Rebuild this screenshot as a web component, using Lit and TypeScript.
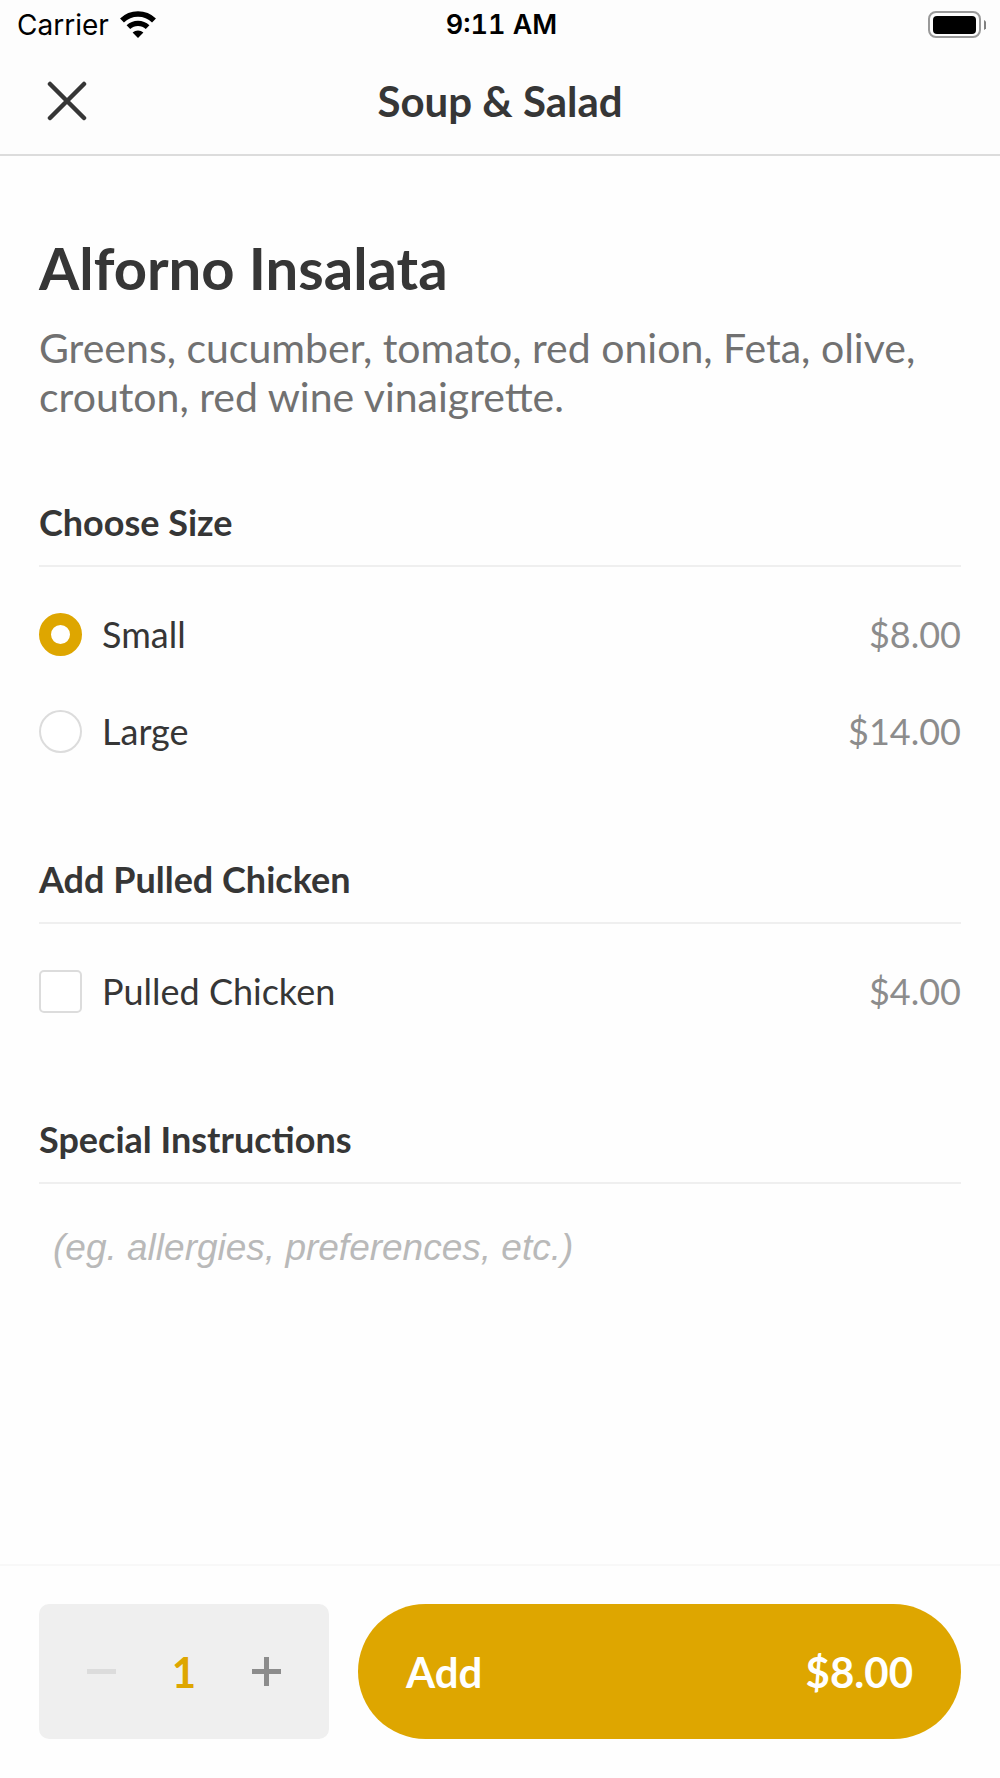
import { LitElement, html, css, svg } from "lit";
import { customElement, state } from "lit/decorators.js";

interface Size {
  id: string;
  name: string;
  price: number;
}

const SIZES: Size[] = [
  { id: "small", name: "Small", price: 8 },
  { id: "large", name: "Large", price: 14 },
];

const CHICKEN_PRICE = 4;

const money = (value: number) => `$${value.toFixed(2)}`;

const wifiIcon = svg`
  <path d="M2 9.500A23 23 0 0 1 34 9.500" fill="none" stroke="#000" stroke-width="5.600" />
  <path d="M8.400 16.200A13.800 13.800 0 0 1 27.600 16.200" fill="none" stroke="#000" stroke-width="5.200" />
  <path d="M12.600 21.600A8 8 0 0 1 23.400 21.600L18 27Z" fill="#000" />
`;

@customElement("status-bar")
export class StatusBar extends LitElement {
  static styles = css`
    :host {
      display: grid;
      grid-template-columns: 1fr auto 1fr;
      align-items: center;
      height: 50px;
      padding: 0 14px 0 17px;
      font-family: Inter, "Liberation Sans", sans-serif;
      font-size: 28px;
      line-height: 34px;
      color: #000;
    }
    .carrier {
      display: flex;
      align-items: center;
      gap: 11px;
    }
    .time {
      font-size: 27px;
      font-weight: 600;
      font-variant-numeric: tabular-nums;
    }
    .battery {
      justify-self: end;
    }
    svg {
      display: block;
    }
  `;

  render() {
    return html`
      <div class="carrier">
        <span>Carrier</span>
        <svg width="36" height="28" viewBox="0 0 36 28" aria-hidden="true">${wifiIcon}</svg>
      </div>
      <div class="time">9:11 AM</div>
      <svg class="battery" width="59" height="28" viewBox="0 0 59 28" aria-hidden="true">
        <rect x="2" y="1" width="51" height="25" rx="7" fill="none" stroke="#999" stroke-width="2" />
        <rect x="6" y="5" width="43" height="18" rx="4" fill="#000" />
        <path d="M57 9Q60 10.500 60 14T57 19Z" fill="#808080" />
      </svg>
    `;
  }
}

@customElement("app-root")
export class AppRoot extends LitElement {
  @state() private size = "small";
  @state() private chicken = false;
  @state() private quantity = 1;

  static styles = css`
    :host {
      --ink: #363636;
      --gold: #dea600;
      --gutter: 39px;
      display: flex;
      flex-direction: column;
      min-height: 100vh;
      background: #fefefe;
      color: var(--ink);
      font-family: Lato, "Liberation Sans", sans-serif;
    }
    * {
      box-sizing: border-box;
    }
    button,
    input,
    textarea {
      margin: 0;
      padding: 0;
      border: 0;
      background: none;
      color: inherit;
      font: inherit;
    }
    button,
    label {
      cursor: pointer;
    }
    svg {
      display: block;
    }
    .top {
      background: #fdfdfd;
      border-bottom: 2px solid #dcdcdc;
    }
    .nav {
      display: grid;
      grid-template-columns: 1fr auto 1fr;
      align-items: center;
      padding: 25px var(--gutter) 27px;
    }
    .close {
      justify-self: start;
      padding: 6px 8px;
    }
    .nav-title {
      margin: 0;
      font-size: 42px;
      line-height: 48px;
      font-weight: 700;
    }
    main {
      flex: 1;
      padding: 77px var(--gutter) 40px;
    }
    .name {
      margin: 0 0 20px;
      font-size: 58px;
      line-height: 70px;
      font-weight: 700;
    }
    .description {
      margin: 0 0 79px;
      font-size: 41px;
      line-height: 49px;
      color: #717171;
    }
    .group {
      margin: 0 0 104px;
      padding: 0;
      border: 0;
      min-width: 0;
    }
    .group-title {
      display: block;
      width: 100%;
      margin: 0 0 46px;
      padding: 0 0 21px;
      border-bottom: 2px solid #efefef;
      font-size: 36px;
      line-height: 44px;
      font-weight: 700;
    }
    .options {
      display: flex;
      flex-direction: column;
      gap: 54px;
    }
    .option {
      display: flex;
      align-items: center;
      gap: 20px;
      height: 43px;
      font-size: 36px;
      line-height: 43px;
    }
    .price {
      margin-left: auto;
      color: #8c8c8c;
    }
    .mark {
      appearance: none;
      flex: none;
      width: 43px;
      height: 43px;
      border: 2px solid #dcdcdc;
      background: #fff;
    }
    .mark.radio {
      border-radius: 50%;
    }
    .mark.radio:checked {
      border: 12px solid var(--gold);
    }
    .mark.box {
      border-radius: 5px;
    }
    .mark.box:checked {
      border-color: var(--gold);
      background: var(--gold);
    }
    .group.notes {
      margin: 0;
    }
    .notes .group-title {
      margin: 0 0 42px;
    }
    .note {
      display: block;
      width: 100%;
      height: 180px;
      padding: 0 14px;
      resize: none;
      outline: none;
      font-family: "Liberation Sans", Arial, sans-serif;
      font-size: 37px;
      line-height: 44px;
    }
    .note::placeholder {
      color: #b9b9b9;
      font-style: italic;
      opacity: 1;
    }
    .footer {
      display: grid;
      grid-template-columns: 290fr 603fr;
      gap: 29px;
      padding: 38px var(--gutter) 39px;
      border-top: 2px solid #f8f8f8;
      font-size: 42px;
      line-height: 48px;
      font-weight: 700;
    }
    .stepper {
      display: flex;
      align-items: center;
      justify-content: space-between;
      height: 135px;
      padding: 0 34px;
      border-radius: 10px;
      background: #efefef;
    }
    .step {
      padding: 14px;
      color: #8c8c8c;
    }
    .step:disabled {
      color: #dcdcdc;
      cursor: default;
    }
    .count {
      color: var(--gold);
    }
    .add {
      display: flex;
      align-items: center;
      justify-content: space-between;
      height: 135px;
      padding: 0 48px;
      border-radius: 68px;
      background: var(--gold);
      color: #fff;
    }
  `;

  private get total() {
    const base = SIZES.find((s) => s.id === this.size)!.price;
    return (base + (this.chicken ? CHICKEN_PRICE : 0)) * this.quantity;
  }

  private renderSize(size: Size) {
    return html`
      <label class="option">
        <input
          class="mark radio"
          type="radio"
          name="size"
          .checked=${this.size === size.id}
          @change=${() => (this.size = size.id)}
        />
        <span>${size.name}</span>
        <span class="price">${money(size.price)}</span>
      </label>
    `;
  }

  render() {
    return html`
      <header class="top">
        <status-bar></status-bar>
        <nav class="nav">
          <button class="close" aria-label="Close">
            <svg width="40" height="40" viewBox="0 0 40 40">
              <path d="M3 3L37 37M37 3L3 37" stroke="#363636" stroke-width="4.500" stroke-linecap="round" />
            </svg>
          </button>
          <h2 class="nav-title">Soup &amp; Salad</h2>
        </nav>
      </header>

      <main>
        <h1 class="name">Alforno Insalata</h1>
        <p class="description">
          Greens, cucumber, tomato, red onion, Feta, olive, crouton, red wine vinaigrette.
        </p>

        <fieldset class="group">
          <legend class="group-title">Choose Size</legend>
          <div class="options">${SIZES.map((s) => this.renderSize(s))}</div>
        </fieldset>

        <fieldset class="group">
          <legend class="group-title">Add Pulled Chicken</legend>
          <label class="option">
            <input
              class="mark box"
              type="checkbox"
              .checked=${this.chicken}
              @change=${() => (this.chicken = !this.chicken)}
            />
            <span>Pulled Chicken</span>
            <span class="price">${money(CHICKEN_PRICE)}</span>
          </label>
        </fieldset>

        <div class="group notes">
          <label class="group-title" for="note">Special Instructions</label>
          <textarea class="note" id="note" placeholder="(eg. allergies, preferences, etc.)"></textarea>
        </div>
      </main>

      <footer class="footer">
        <div class="stepper">
          <button
            class="step"
            aria-label="Decrease quantity"
            ?disabled=${this.quantity === 1}
            @click=${() => (this.quantity -= 1)}
          >
            <svg width="29" height="29" viewBox="0 0 29 29">
              <path d="M0 14.500H29" stroke="currentColor" stroke-width="5" />
            </svg>
          </button>
          <output class="count">${this.quantity}</output>
          <button class="step" aria-label="Increase quantity" @click=${() => (this.quantity += 1)}>
            <svg width="29" height="29" viewBox="0 0 29 29">
              <path d="M0 14.500H29M14.500 0V29" stroke="currentColor" stroke-width="5" />
            </svg>
          </button>
        </div>
        <button class="add">
          <span>Add</span>
          <span>${money(this.total)}</span>
        </button>
      </footer>
    `;
  }
}
